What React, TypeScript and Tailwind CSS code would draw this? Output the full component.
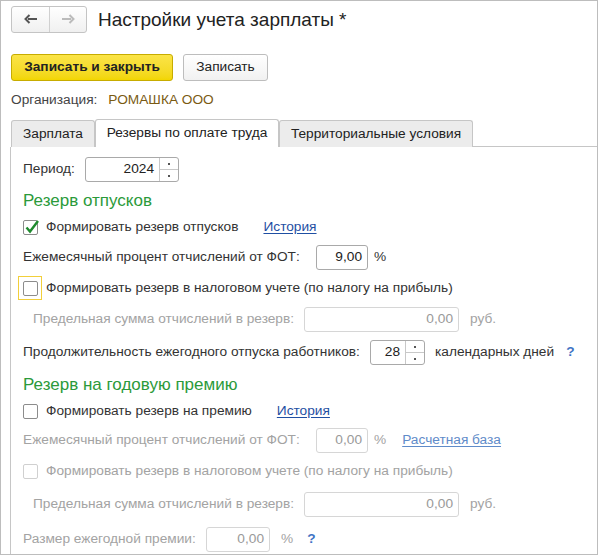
import React from 'react';

// Настройки учета зарплаты — форма 1С (вкладка "Резервы по оплате труда")

const font = "font-['Liberation_Sans',Arial,sans-serif]";

function Field({ value, w, disabled }: { value: string; w: string; disabled?: boolean }) {
  return (
    <div
      className={`${w} h-[25px] rounded-[3px] border ${disabled ? 'border-[#d6d6d6] text-[#9a9a9a]' : 'border-[#a9a9a9] text-[#222]'} bg-white flex items-center justify-end pr-[5px] text-[13.7px]`}
    >
      {value}
    </div>
  );
}

function Spin({ value, w }: { value: string; w: string }) {
  return (
    <div className={`${w} h-[25px] rounded-[3px] border border-[#a9a9a9] bg-white flex text-[13.7px] text-[#222]`}>
      <div className="flex-1 flex items-center justify-end pr-[5px]">{value}</div>
      <div className="w-[19px] border-l border-[#c8c8c8] flex flex-col">
        <div className="flex-1 flex items-center justify-center border-b border-[#c8c8c8]">
          <span className="w-[2px] h-[2px] bg-[#555]" />
        </div>
        <div className="flex-1 flex items-center justify-center">
          <span className="w-[2px] h-[2px] bg-[#555]" />
        </div>
      </div>
    </div>
  );
}

function Check({ checked, disabled, focused }: { checked?: boolean; disabled?: boolean; focused?: boolean }) {
  const box = (
    <div
      className={`w-[15px] h-[15px] rounded-[2px] border ${disabled ? 'border-[#d0d0d0]' : 'border-[#8c8c8c]'} bg-white relative`}
    >
      {checked && (
        <svg className="absolute -left-[1px] -top-[3px]" width="18" height="18" viewBox="0 0 18 18">
          <path d="M3.5 9.5 L7 13.5 L15 3" fill="none" stroke="#1f8a2e" strokeWidth="2.4" />
        </svg>
      )}
    </div>
  );
  if (focused) {
    return (
      <div className="w-[24px] h-[24px] -ml-[5px] -mr-[4px] border border-[#f2cf3a] flex items-center justify-center">
        {box}
      </div>
    );
  }
  return box;
}

export default function App() {
  return (
    <div className={`${font} w-[598px] h-[555px] bg-white border border-[#bdbdbd] text-[13.7px] text-[#333] overflow-hidden`}>
      {/* Заголовок */}
      <div className="flex items-center pl-[10px] pt-[4px] h-[32px]">
        <div className="flex h-[27px] w-[76px] rounded-[3px] border border-[#c4c4c4] bg-gradient-to-b from-white to-[#f0f0f0]">
          <div className="w-[38px] flex items-center justify-center border-r border-[#d0d0d0]">
            <svg width="14" height="10" viewBox="0 0 14 10">
              <path d="M13 5 H4 M5.5 1 L1.5 5 L5.5 9" fill="none" stroke="#555" strokeWidth="2" />
            </svg>
          </div>
          <div className="flex-1 flex items-center justify-center">
            <svg width="14" height="10" viewBox="0 0 14 10">
              <path d="M1 5 H10 M8.5 1 L12.5 5 L8.5 9" fill="none" stroke="#bbb" strokeWidth="2" />
            </svg>
          </div>
        </div>
        <div className="ml-[11px] text-[19px] text-[#222] leading-none">Настройки учета зарплаты *</div>
      </div>

      {/* Кнопки */}
      <div className="flex pl-[10px] mt-[21px] gap-[10px]">
        <div className="h-[27px] w-[162px] rounded-[3px] border border-[#c7ac00] bg-gradient-to-b from-[#fbe446] to-[#f2d600] flex items-center justify-center font-bold text-[13.7px] text-[#222]">
          Записать и закрыть
        </div>
        <div className="h-[27px] w-[85px] rounded-[3px] border border-[#bdbdbd] bg-gradient-to-b from-white to-[#f1f1f1] flex items-center justify-center text-[13.7px] text-[#222]">
          Записать
        </div>
      </div>

      {/* Организация */}
      <div className="flex items-center pl-[10px] mt-[11px] h-[17px]">
        <span className="text-[#444]">Организация:</span>
        <span className="ml-[11px] text-[#7a5a12]">РОМАШКА ООО</span>
      </div>

      {/* Вкладки */}
      <div className="flex pl-[10px] mt-[10px] h-[28px] items-end">
        <div className="h-[27px] w-[84px] rounded-t-[3px] border border-[#c6c6c6] border-b-0 bg-[#ececec] flex items-center justify-center text-[#222]">
          Зарплата
        </div>
        <div className="h-[28px] w-[184px] rounded-t-[3px] border border-[#c6c6c6] border-b-0 bg-white flex items-center justify-center text-[#222]">
          Резервы по оплате труда
        </div>
        <div className="h-[27px] w-[194px] rounded-t-[3px] border border-[#c6c6c6] border-b-0 bg-[#ececec] flex items-center justify-center text-[#222]">
          Территориальные условия
        </div>
        <div className="flex-1 border-b border-[#c6c6c6]" />
      </div>

      {/* Панель */}
      <div className="ml-[9px] border-l border-[#c6c6c6] h-[430px] pl-[12px] pt-[10px] text-[#333]">
        <div className="flex items-center h-[25px]">
          <span className="w-[62px]">Период:</span>
          <Spin value="2024" w="w-[94px]" />
        </div>

        <div className="mt-[9px] text-[17px] text-[#2b9a3a] leading-[20px]">Резерв отпусков</div>

        <div className="flex items-center h-[20px] mt-[6px]">
          <div className="mr-[8px]">
            <Check checked />
          </div>
          <span>Формировать резерв отпусков</span>
          <span className="ml-[25px] text-[#1f4fa3] underline underline-offset-2">История</span>
        </div>

        <div className="flex items-center h-[25px] mt-[8px]">
          <span className="w-[293px]">Ежемесячный процент отчислений от ФОТ:</span>
          <Field value="9,00" w="w-[52px]" />
          <span className="ml-[6px]">%</span>
        </div>

        <div className="flex items-center h-[26px] mt-[5px]">
          <div className="mr-[8px]">
            <Check focused />
          </div>
          <span>Формировать резерв в налоговом учете (по налогу на прибыль)</span>
        </div>

        <div className="flex items-center h-[25px] mt-[6px] pl-[10px] text-[#a3a3a3]">
          <span className="w-[271px]">Предельная сумма отчислений в резерв:</span>
          <Field value="0,00" w="w-[155px]" disabled />
          <span className="ml-[11px]">руб.</span>
        </div>

        <div className="flex items-center h-[25px] mt-[8px]">
          <span className="w-[347px]">Продолжительность ежегодного отпуска работников:</span>
          <Spin value="28" w="w-[55px]" />
          <span className="ml-[10px]">календарных дней</span>
          <span className="ml-[12px] text-[#3f73c4] font-bold">?</span>
        </div>

        <div className="mt-[10px] text-[17px] text-[#2b9a3a] leading-[20px]">Резерв на годовую премию</div>

        <div className="flex items-center h-[20px] mt-[6px]">
          <div className="mr-[8px]">
            <Check />
          </div>
          <span>Формировать резерв на премию</span>
          <span className="ml-[25px] text-[#1f4fa3] underline underline-offset-2">История</span>
        </div>

        <div className="flex items-center h-[25px] mt-[7px] text-[#a3a3a3]">
          <span className="w-[293px]">Ежемесячный процент отчислений от ФОТ:</span>
          <Field value="0,00" w="w-[52px]" disabled />
          <span className="ml-[6px]">%</span>
          <span className="ml-[16px] text-[#5f8bc9] underline underline-offset-2">Расчетная база</span>
        </div>

        <div className="flex items-center h-[20px] mt-[8px] text-[#a3a3a3]">
          <div className="mr-[8px]">
            <Check disabled />
          </div>
          <span>Формировать резерв в налоговом учете (по налогу на прибыль)</span>
        </div>

        <div className="flex items-center h-[25px] mt-[11px] pl-[10px] text-[#a3a3a3]">
          <span className="w-[271px]">Предельная сумма отчислений в резерв:</span>
          <Field value="0,00" w="w-[155px]" disabled />
          <span className="ml-[11px]">руб.</span>
        </div>

        <div className="flex items-center h-[25px] mt-[10px] text-[#a3a3a3]">
          <span className="w-[183px]">Размер ежегодной премии:</span>
          <Field value="0,00" w="w-[64px]" disabled />
          <span className="ml-[11px]">%</span>
          <span className="ml-[14px] text-[#3f73c4] font-bold">?</span>
        </div>
      </div>
    </div>
  );
}
